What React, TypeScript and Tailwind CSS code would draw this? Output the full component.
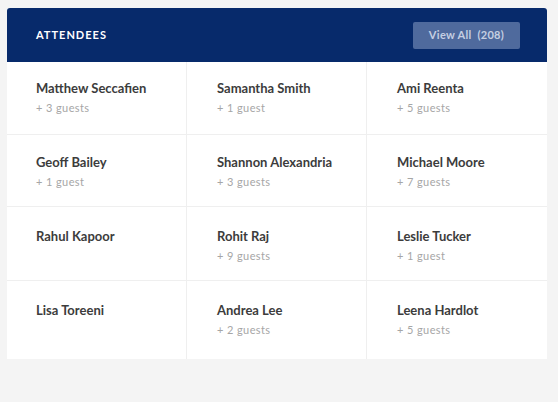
import React from "react";

type Attendee = { name: string; guests?: string };

const rows: Attendee[][] = [
  [
    { name: "Matthew Seccafien", guests: "+ 3 guests" },
    { name: "Samantha Smith", guests: "+ 1 guest" },
    { name: "Ami Reenta", guests: "+ 5 guests" },
  ],
  [
    { name: "Geoff Bailey", guests: "+ 1 guest" },
    { name: "Shannon Alexandria", guests: "+ 3 guests" },
    { name: "Michael Moore", guests: "+ 7 guests" },
  ],
  [
    { name: "Rahul Kapoor" },
    { name: "Rohit Raj", guests: "+ 9 guests" },
    { name: "Leslie Tucker", guests: "+ 1 guest" },
  ],
  [
    { name: "Lisa Toreeni" },
    { name: "Andrea Lee", guests: "+ 2 guests" },
    { name: "Leena Hardlot", guests: "+ 5 guests" },
  ],
];

const rowHeights = ["h-[73px]", "h-[72px]", "h-[74px]", "h-[78px]"];
const rowPads = ["pt-[18px]", "pt-[19px]", "pt-[21px]", "pt-[21px]"];

export default function App() {
  return (
    <div
      className="w-[558px] h-[402px] bg-[#f4f4f4] pt-[8px] pl-[7px]"
      style={{ fontFamily: "Lato, 'Noto Sans', sans-serif" }}
    >
      <div className="w-[540px] bg-white rounded-t-[3px] overflow-hidden">
        <div className="h-[54px] bg-[#072a6b] flex items-center justify-between pl-[29px] pr-[27px]">
          <span className="text-white text-[11px] font-bold tracking-[1px]">ATTENDEES</span>
          <div className="w-[107px] h-[27px] rounded-[2px] bg-[#4f6a9d] flex items-center justify-center text-[11px] font-bold text-[#c5cfe2] tracking-[0.3px] whitespace-pre">
            View All  (208)
          </div>
        </div>
        {rows.map((row, ri) => (
          <div
            key={ri}
            className={`grid grid-cols-[180px_180px_180px] ${rowHeights[ri]} ${
              ri < rows.length - 1 ? "border-b border-[#efefef]" : ""
            }`}
          >
            {row.map((a, ci) => (
              <div
                key={ci}
                className={`${ci === 0 ? "pl-[29px]" : "pl-[30px]"} ${rowPads[ri]} ${
                  ci < 2 ? "border-r border-[#efefef]" : ""
                }`}
              >
                <div className="text-[13px] leading-[16px] font-bold text-[#3c3c3c]">{a.name}</div>
                {a.guests && (
                  <div className="mt-[5px] text-[11px] leading-[14px] text-[#a6a6a6] tracking-[0.4px] whitespace-pre">
                    {a.guests}
                  </div>
                )}
              </div>
            ))}
          </div>
        ))}
      </div>
    </div>
  );
}
